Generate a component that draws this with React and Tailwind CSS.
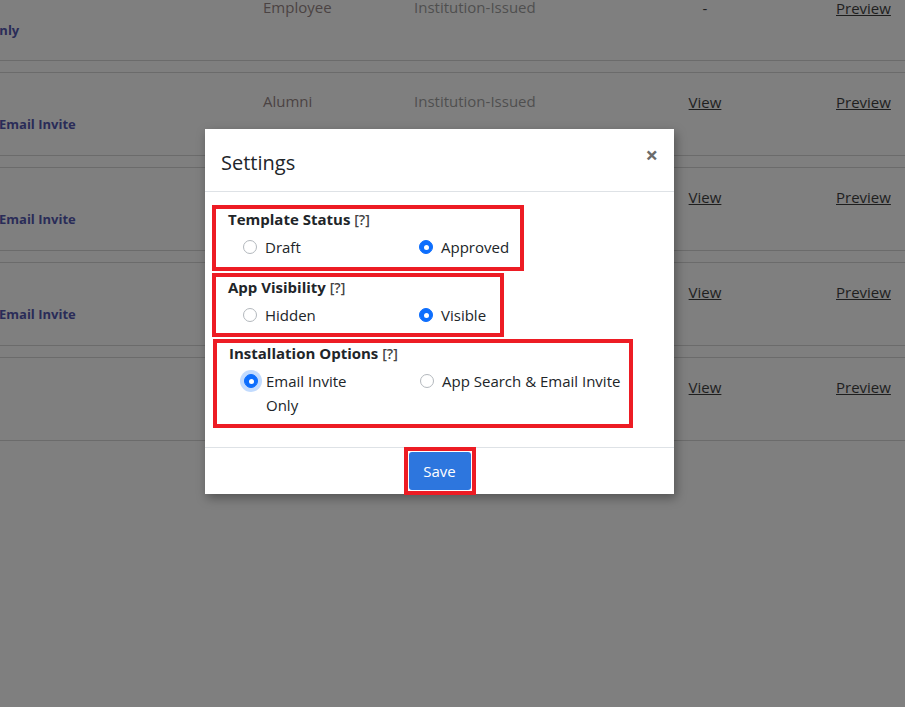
import React from 'react';

const font = { fontFamily: '"Open Sans", "Noto Sans", sans-serif' };

const rows = [
  { who: 'Employee', lead: 'Only', cut: true, view: false },
  { who: 'Alumni', lead: 'Email Invite', view: true },
  { who: '', lead: 'Email Invite', view: true },
  { who: '', lead: 'Email Invite', view: true },
  { who: '', lead: '', view: true },
];

const Radio = ({ checked, focus }) => (
  <span
    className={
      'mt-[5px] flex h-[14px] w-[14px] shrink-0 items-center justify-center rounded-full border ' +
      (checked ? 'border-[#0d6efd] bg-[#0d6efd]' : 'border-[#b3b8bd] bg-white') +
      (focus ? ' ring-4 ring-[#0d6efd]/25' : '')
    }
  >
    {checked && <span className="h-[5px] w-[5px] rounded-full bg-white" />}
  </span>
);

const Option = ({ label, checked, focus, narrow }) => (
  <label className="flex items-start gap-2 whitespace-nowrap text-[15px] leading-6 text-[#212529]">
    <Radio checked={checked} focus={focus} />
    <span className={narrow ? 'w-[100px] whitespace-normal' : ''}>{label}</span>
  </label>
);

const Group = ({ title, width, height, left, right }) => (
  <div className="border-4 border-[#ed1c24] px-3" style={{ width, height }}>
    <div className="text-[15px] font-bold leading-5 text-[#212529]">
      {title} <span className="text-[14px] font-semibold text-[#444]">[?]</span>
    </div>
    <div className="mt-[5px] flex pl-[15px]">
      <div className="w-[176px] shrink-0">{left}</div>
      <div className="shrink-0">{right}</div>
    </div>
  </div>
);

export default function App() {
  return (
    <div className="relative h-[707px] w-[905px] overflow-hidden bg-[#7f7f7f]" style={font}>
      {/* table behind the modal */}
      <div className="-mt-[23px]">
        {rows.map((r, i) => (
          <div
            key={i}
            className={
              'flex h-[84px] border-b border-[#6b6b6b] ' +
              (i > 0 ? 'mt-[11px] border-t' : 'border-t-2 border-t-transparent')
            }
          >
            <div className="w-[263px] pt-[41px] text-[13px] font-bold leading-5 text-[#2a2c58]">
              {r.lead && <span className={r.cut ? '-ml-[11px] block' : '-ml-px block'}>{r.lead}</span>}
            </div>
            <div className="w-[151px] pt-[16px] text-[15px] leading-6 text-[#4b4343]">{r.who}</div>
            <div className="w-[274px] pt-[16px] text-[15px] leading-6 text-[#4f4f4f]">
              {i < 2 ? 'Institution-Issued' : ''}
            </div>
            <div className="w-[148px] pt-[17px] text-[15px] leading-6 text-[#1e1e1e]">
              <span className="block w-[34px] text-center">
                {r.view ? <span className="underline">View</span> : '-'}
              </span>
            </div>
            <div className="pt-[17px] text-[15px] leading-6 text-[#1e1e1e] underline">Preview</div>
          </div>
        ))}
      </div>

      {/* settings modal */}
      <div className="absolute left-[205px] top-[129px] w-[469px] bg-white shadow-[2px_4px_10px_rgba(0,0,0,0.35)]">
        <div className="flex h-[63px] items-start justify-between border-b border-[#dee2e6] pl-4 pr-[16px]">
          <h2 className="mt-[20px] text-[20px] leading-7 text-[#212529]">Settings</h2>
          <button className="mt-[13px] text-[22px] font-bold leading-6 text-[#6b6b6b]">×</button>
        </div>

        <div className="flex h-[255px] flex-col gap-[2px] pl-[7px] pt-[13px]">
          <Group
            title="Template Status"
            width={312}
            height={66}
            left={<Option label="Draft" />}
            right={<Option label="Approved" checked />}
          />
          <Group
            title="App Visibility"
            width={292}
            height={64}
            left={<Option label="Hidden" />}
            right={<Option label="Visible" checked />}
          />
          <div className="pl-[1px]">
            <Group
              title="Installation Options"
              width={420}
              height={89}
              left={<Option label="Email Invite Only" checked focus narrow />}
              right={<Option label="App Search & Email Invite" />}
            />
          </div>
        </div>

        <div className="flex h-[47px] justify-center border-t border-[#dee2e6]">
          <div className="-mt-[1px] h-[48px] border-4 border-[#ed1c24] p-px">
            <button className="h-[38px] w-[62px] rounded-[3px] bg-[#2d76de] text-[15px] text-white">
              Save
            </button>
          </div>
        </div>
      </div>
    </div>
  );
}
